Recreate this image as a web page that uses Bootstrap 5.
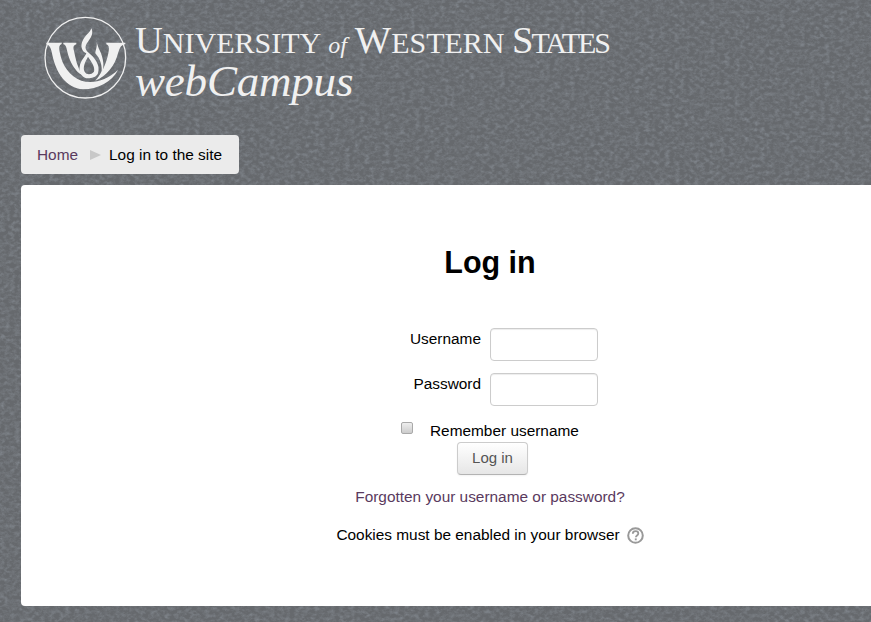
<!DOCTYPE html>
<html lang="en"><head><meta charset="utf-8"><title>Log in</title>
<link href="https://cdn.jsdelivr.net/npm/bootstrap@5.3.0/dist/css/bootstrap.min.css" rel="stylesheet">
<style>
html,body{height:622px;overflow:hidden}
body{background-color:#66696d;font-family:"Liberation Sans",Arial,sans-serif;font-size:15.4px;color:#000;position:relative}
.texture{position:absolute;left:0;top:0;width:871px;height:622px;z-index:0}
.page{position:relative;z-index:1;padding:0 0 0 21px;width:959px}
.brand{height:135px;margin-left:-21px;padding:15px 0 0 42px;color:#f0f0f0;font-family:"Liberation Serif",serif}
.emblem{width:86px;height:84px;flex:none}
.brandtext{margin:7px 0 0 7px}
.line1{font-size:30px;line-height:36px;white-space:nowrap}
.line1 b{font-weight:400;font-size:38.5px}
.line1 i{font-size:24px;margin:0 8px 0 7px}
.narrow{letter-spacing:-2px}
.line2{font-style:italic;font-size:45px;line-height:40px;margin-top:-2px;letter-spacing:-.2px}
.crumbbox{width:218px;height:39px;background:#ebebeb;border-radius:4px;padding:1px 16px 0 16px;color:#000;white-space:nowrap}
.crumbbox a,.forgot{color:#5a3a5e;text-decoration:none}
.crumbarrow{width:0;height:0;border-left:11px solid #c8c8c8;border-top:5.5px solid transparent;border-bottom:5.5px solid transparent;margin:0 8px 0 12px}
.panel{background:#fff;border-radius:4px 0 0 4px;height:421px;margin-top:11px;padding-top:59px}
.panel h2{font-size:30.5px;font-weight:700;line-height:36px;margin:0;text-align:center}
.fieldrow{height:33px;margin-bottom:12px}
.fieldlabel{width:469px;text-align:right;padding:1px 9px 0 0;line-height:20px}
.fieldbox{width:108px;height:33px;border:1px solid #ccc;border-radius:4px;padding:4px 6px;box-shadow:inset 0 1px 1px rgba(0,0,0,.075);background:#fff;outline:0}
.formarea{margin-top:48px}
.rememberrow{padding-left:380px;height:22px;margin-top:14px}
.tick{width:12px;height:12px;border:1px solid #a9a9a9;border-radius:2px;background:linear-gradient(#eee,#ccc);appearance:none;margin:-6px 17px 0 0;flex:none}
.signin{width:71px;height:33px;margin-left:5px;border:1px solid #ccc;border-bottom-color:#b3b3b3;border-radius:4px;background:linear-gradient(#fff,#e6e6e6);color:#555;font-size:15px;padding:0;box-shadow:0 1px 2px rgba(0,0,0,.05)}
.signin:hover{color:#555}
.forgotline{margin-top:12px;line-height:20px}
.cookieline{margin-top:18px;line-height:20px}
.helpicon{margin-left:7px}
</style></head>
<body>
<svg class="texture" aria-hidden="true"><filter id="grain" x="0" y="0" width="100%" height="100%"><feTurbulence type="fractalNoise" baseFrequency="0.2 0.28" numOctaves="4" seed="7"/><feColorMatrix type="matrix" values="0 0 0 0 .34  0 0 0 0 .38  0 0 0 0 .43  .6 .6 0 0 -.5"/></filter><rect width="871" height="622" filter="url(#grain)"/></svg>
<div class="page">
<header class="brand d-flex align-items-start">
<svg class="emblem" viewBox="12 15 258 252" aria-hidden="true"><circle cx="142" cy="143" r="121" fill="none" stroke="#f0f0f0" stroke-width="4"/><g fill="#f0f0f0"><path d="M25 98H72L70 103C62 106 63 115 66 130C72 165 95 200 130 212C165 222 205 212 240 180C222 215 180 238 135 238C85 235 55 190 43 135C40 118 36 106 25 103Z"/><path d="M76 98H115V103C106 106 105 112 108 122C112 145 118 170 132 195C112 185 95 155 88 125C85 112 84 105 76 103Z"/><path d="M205 98H262V103C250 104 246 112 240 130C232 165 205 200 172 212C192 190 205 160 211 130C214 115 214 106 205 103Z"/><path fill-rule="evenodd" d="M160 55C168 70 158 85 150 95C140 108 140 118 152 128C170 142 188 165 180 190C175 203 160 205 150 205C135 205 122 190 125 170C128 150 142 140 145 130C132 125 125 108 135 90C142 75 155 70 160 55ZM150 140C142 155 133 172 140 185C145 195 160 195 168 185C172 170 160 155 150 140Z"/><path d="M172 85C182 105 172 120 172 130C185 145 195 165 190 195C205 165 190 130 182 115C178 105 176 95 172 85Z"/></g></svg>
<div class="brandtext"><div class="line1"><b>U</b>NIVERSITY<i>of</i><b>W</b>ESTERN <span class="narrow"><b>S</b>TATES</span></div><div class="line2">webCampus</div></div>
</header>
<nav class="crumbbox d-flex align-items-center"><a href="#">Home</a><span class="crumbarrow"></span><span>Log in to the site</span></nav>
<main class="panel">
<h2>Log in</h2>
<form class="formarea">
<div class="fieldrow d-flex align-items-start"><label class="fieldlabel" for="u">Username</label><input id="u" class="fieldbox" type="text"></div>
<div class="fieldrow d-flex align-items-start"><label class="fieldlabel" for="p">Password</label><input id="p" class="fieldbox" type="password"></div>
<div class="rememberrow d-flex align-items-center"><input id="r" class="tick" type="checkbox"><label for="r">Remember username</label></div>
<div class="text-center"><button type="button" class="btn signin">Log in</button></div>
</form>
<div class="forgotline text-center"><a class="forgot" href="#">Forgotten your username or password?</a></div>
<div class="cookieline d-flex justify-content-center align-items-center"><span>Cookies must be enabled in your browser</span><svg class="helpicon" width="17" height="17" viewBox="0 0 17 17" aria-hidden="true"><circle cx="8.5" cy="8.5" r="7.3" fill="none" stroke="#999" stroke-width="2"/><path d="M5.8 6.7c0-1.6 1.2-2.5 2.8-2.5s2.7.9 2.7 2.3c0 2-2.4 2-2.4 3.8" fill="none" stroke="#999" stroke-width="1.8"/><rect x="7.8" y="11.4" width="1.9" height="1.9" fill="#999"/></svg></div>
</main>
</div>
</body></html>
